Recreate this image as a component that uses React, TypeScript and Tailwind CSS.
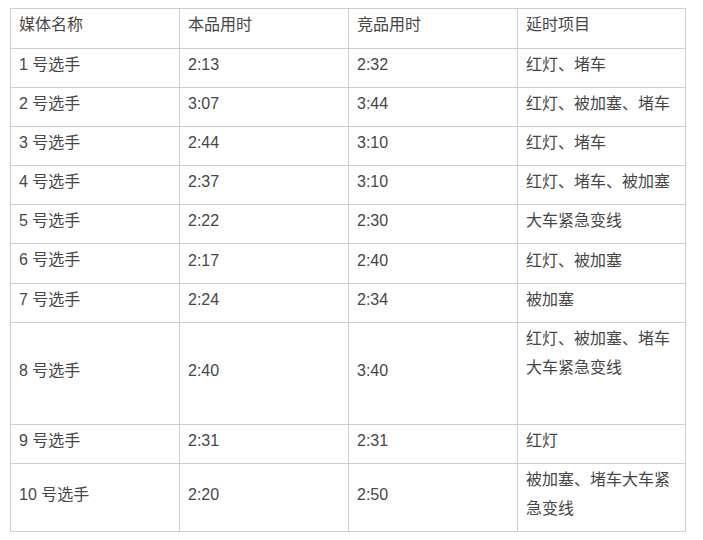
const rows: { name: string; own: string; rival: string; delay: React.ReactNode; tall?: boolean }[] = [
  { name: "1 号选手", own: "2:13", rival: "2:32", delay: "红灯、堵车" },
  { name: "2 号选手", own: "3:07", rival: "3:44", delay: "红灯、被加塞、堵车" },
  { name: "3 号选手", own: "2:44", rival: "3:10", delay: "红灯、堵车" },
  { name: "4 号选手", own: "2:37", rival: "3:10", delay: "红灯、堵车、被加塞" },
  { name: "5 号选手", own: "2:22", rival: "2:30", delay: "大车紧急变线" },
  { name: "6 号选手", own: "2:17", rival: "2:40", delay: "红灯、被加塞" },
  { name: "7 号选手", own: "2:24", rival: "2:34", delay: "被加塞" },
  {
    name: "8 号选手",
    own: "2:40",
    rival: "3:40",
    delay: (
      <div className="h-[92px]">
        红灯、被加塞、堵车
        <br />
        大车紧急变线
      </div>
    ),
    tall: true,
  },
  { name: "9 号选手", own: "2:31", rival: "2:31", delay: "红灯" },
  { name: "10 号选手", own: "2:20", rival: "2:50", delay: "被加塞、堵车大车紧急变线" },
];

const cell = "border border-[#cfcfcf] px-2 pt-[1px] pb-[8px] align-middle";

export default function App() {
  return (
    <div
      className="min-h-[540px] bg-white pt-2 pl-[10px] text-[16px] leading-[29px] text-[#474747]"
      style={{ fontFamily: '"Liberation Sans", "Noto Sans CJK SC", sans-serif' }}
    >
      <table className="w-[675px] table-fixed border-collapse">
        <colgroup>
          <col className="w-[169px]" />
          <col className="w-[169px]" />
          <col className="w-[169px]" />
          <col className="w-[168px]" />
        </colgroup>
        <thead>
          <tr>
            {["媒体名称", "本品用时", "竞品用时", "延时项目"].map((h) => (
              <th key={h} className={`${cell} pb-[9px] text-left font-normal`}>
                {h}
              </th>
            ))}
          </tr>
        </thead>
        <tbody>
          {rows.map((r, i) => (
            <tr key={r.name}>
              <td className={i === 5 ? `${cell} pb-[9px]` : cell}>{r.name}</td>
              <td className={cell}>{r.own}</td>
              <td className={cell}>{r.rival}</td>
              <td className={r.tall ? `${cell} align-top` : cell}>{r.delay}</td>
            </tr>
          ))}
        </tbody>
      </table>
    </div>
  );
}
